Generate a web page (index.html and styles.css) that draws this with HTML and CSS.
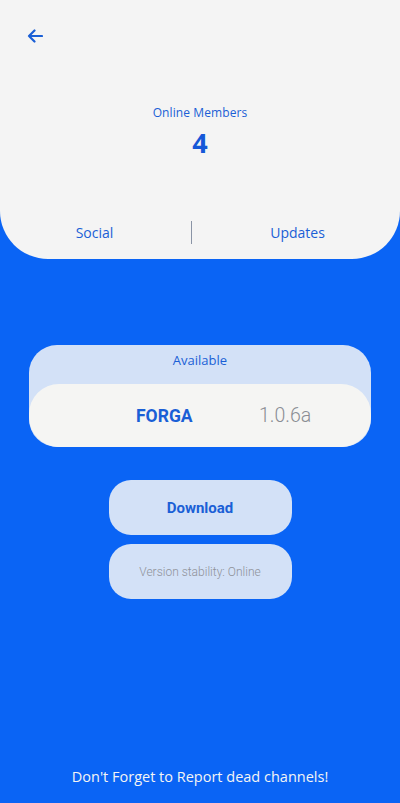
FILE: index.html
```html
<!DOCTYPE html>
<html>
<head>
<meta charset="utf-8">
<link rel="stylesheet" href="styles.css">
</head>
<body>
<div class="page">
  <header class="top">
    <div class="back">
      <svg width="16" height="14" viewBox="0 0 16 14"><path d="M15 7H2M7.5 1.5L2 7l5.5 5.5" fill="none" stroke="#1a5fd6" stroke-width="2.2" stroke-linecap="round" stroke-linejoin="round"/></svg>
    </div>
    <div class="members">
      <div class="members-label">Online Members</div>
      <div class="members-count">4</div>
    </div>
    <nav class="tabs">
      <div class="tab">Social</div>
      <div class="divider"></div>
      <div class="tab">Updates</div>
    </nav>
  </header>
  <main class="content">
    <section class="avail">
      <div class="avail-title">Available</div>
      <div class="avail-item">
        <span class="name">FORGA</span>
        <span class="version">1.0.6a</span>
      </div>
    </section>
    <div class="btn btn-download">Download</div>
    <div class="btn btn-status">Version stability: Online</div>
  </main>
  <footer class="foot">Don't Forget to Report dead channels!</footer>
</div>
</body>
</html>
```
FILE: styles.css
```css
* { box-sizing: border-box; }
html, body { margin: 0; padding: 0; }
body {
  background: #0a64f5;
  font-family: "Open Sans", "Noto Sans", sans-serif;
  width: 400px;
  height: 803px;
  overflow: hidden;
}
.page {
  display: flex;
  flex-direction: column;
  height: 803px;
}
.top {
  background: #f4f4f4;
  height: 259px;
  border-radius: 0 0 48px 48px;
  display: flex;
  flex-direction: column;
  padding: 27px 0 15px 0;
}
.back {
  padding-left: 27px;
  height: 18px;
  display: flex;
  align-items: center;
}
.members {
  margin-top: 60px;
  text-align: center;
  color: #1a5fd6;
}
.members-label {
  font-size: 12px;
  line-height: 16px;
  letter-spacing: 0.1px;
}
.members-count {
  font-size: 27px;
  font-weight: 700;
  line-height: 30px;
  margin-top: 7px;
  color: #1558d8;
}
.tabs {
  margin-top: auto;
  display: grid;
  grid-template-columns: 1fr 2px 1fr;
  align-items: center;
}
.tab {
  text-align: center;
  color: #1a5fd6;
  font-size: 14px;
  line-height: 20px;
}
.tab:first-child { transform: translateX(-5px); }
.tab:last-child { transform: translateX(-3px); }
.divider {
  width: 1px;
  height: 23px;
  background: #8a94a6;
  justify-self: center;
  transform: translateX(-9px);
}
.content {
  flex: 1;
  display: flex;
  flex-direction: column;
  align-items: center;
  padding-top: 86px;
}
.avail {
  width: 342px;
  background: #d3e1f7;
  border-radius: 28px;
  display: flex;
  flex-direction: column;
  align-items: stretch;
}
.avail-title {
  text-align: center;
  color: #1a5fd6;
  font-size: 13px;
  line-height: 18px;
  padding: 6px 0 15px;
}
.avail-item {
  background: #f5f5f3;
  border-radius: 30px;
  height: 63px;
  display: flex;
  align-items: center;
  padding-left: 107px;
}
.name {
  font-family: Roboto, "Noto Sans", sans-serif;
  font-weight: 700;
  color: #1a5fd6;
  font-size: 17.5px;
  width: 123px;
}
.version {
  font-family: Roboto, sans-serif;
  font-weight: 300;
  color: #8a8d93;
  font-size: 19.5px;
}
.btn {
  width: 183px;
  height: 55px;
  background: #d3e1f7;
  border-radius: 22px;
  display: flex;
  align-items: center;
  justify-content: center;
  font-family: Roboto, sans-serif;
}
.btn-download {
  margin-top: 33px;
  color: #1a5fd6;
  font-weight: 700;
  font-size: 15px;
}
.btn-status {
  margin-top: 9px;
  color: #8f9299;
  font-weight: 300;
  font-size: 12px;
}
.foot {
  text-align: center;
  color: #f4f4f4;
  font-size: 14.5px;
  line-height: 18px;
  padding-bottom: 17px;
}
```
